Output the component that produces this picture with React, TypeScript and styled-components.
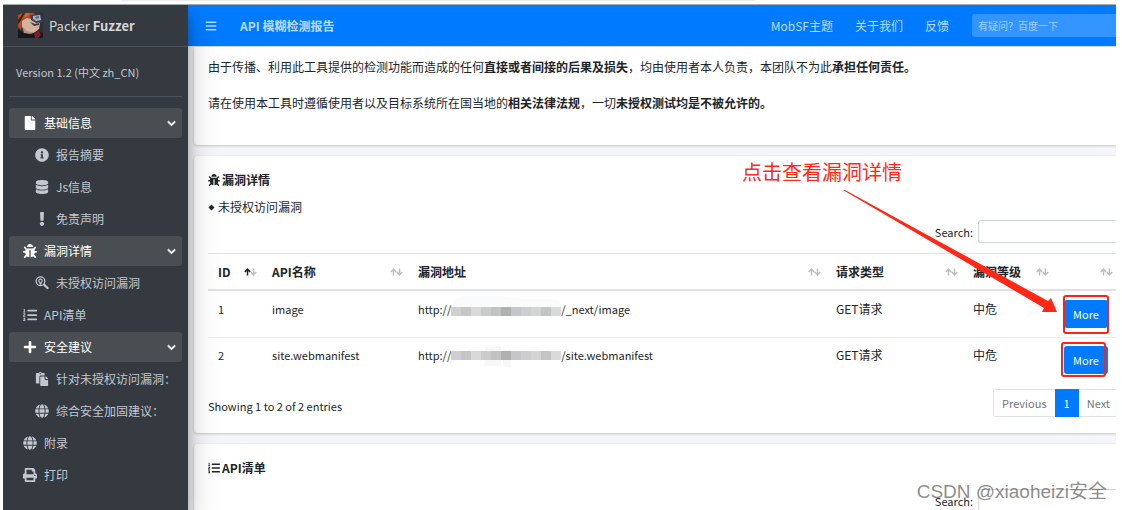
import React from 'react';
import styled, { createGlobalStyle } from 'styled-components';
import {
  FaBars, FaBug, FaChevronDown, FaDatabase, FaExclamation, FaFile, FaGlobe,
  FaInfoCircle, FaListOl, FaPaste, FaPlus, FaPrint,
} from 'react-icons/fa';

const GlobalStyle = createGlobalStyle`
  * { box-sizing: border-box; }
  body {
    margin: 0;
    background: #fff;
    color: #212529;
    font: 12px/18px "Noto Sans CJK SC", "Noto Sans", sans-serif;
  }
  button, input { font: inherit; }
  a { color: inherit; text-decoration: none; }
`;

const Page = styled.div`
  height: 100vh;
  padding: 0 6px 0 3px;
  display: flex;
  flex-direction: column;
  overflow: hidden;
`;

const TopStrip = styled.div`
  flex: none;
  height: 5px;
  border-bottom: 1px solid #a5abb0;
  &::before {
    content: "";
    display: block;
    width: 57%;
    height: 1px;
    margin-left: 118px;
    background: #ededf0;
  }
`;

const Shell = styled.div`
  flex: 1;
  min-height: 0;
  display: flex;
  position: relative;
  overflow: hidden;
`;

const Sidebar = styled.aside`
  flex: none;
  width: 185px;
  position: relative;
  z-index: 2;
  background: #343a40;
  color: #c2c7d0;
  box-shadow: 0 14px 28px rgba(0, 0, 0, .25), 0 10px 10px rgba(0, 0, 0, .22);
`;

const Brand = styled.a`
  display: flex;
  align-items: center;
  gap: 6px;
  height: 42px;
  padding-left: 15px;
  border-bottom: 1px solid #4b545c;
  color: #d5d7d9;
  font-size: 13px;
  b { font-weight: 700; }
`;

const Version = styled.div`
  margin: 0 6px;
  padding: 16px 7px 15px;
  border-bottom: 1px solid #4b545c;
  font-size: 11px;
`;

const Menu = styled.nav`
  display: flex;
  flex-direction: column;
  gap: 2px;
  padding: 11px 6px;
`;

const MenuItem = styled.a<{ $open?: boolean; $nested?: boolean }>`
  display: flex;
  align-items: center;
  gap: 7px;
  height: 30px;
  padding: 0 6px 0 ${p => (p.$nested ? 26 : 14)}px;
  border-radius: 3px;
  white-space: nowrap;
  background: ${p => (p.$open ? '#494e52' : 'transparent')};
  color: ${p => (p.$open ? '#fff' : '#c2c7d0')};
  > svg:first-child { width: 14px; height: 14px; flex: none; }
  > svg:last-child { width: 9px; height: 9px; margin-left: auto; stroke: currentColor; stroke-width: 30px; }
`;

const Main = styled.div`
  flex: 1;
  min-width: 0;
  background: #f4f6f9;
`;

const Header = styled.header`
  display: flex;
  align-items: center;
  gap: 23px;
  height: 42px;
  padding-left: 17px;
  background: #007bff;
  border-bottom: 1px solid #dee2e6;
  color: #b8dbff;
`;

const IconButton = styled.button`
  display: flex;
  padding: 0;
  border: 0;
  background: none;
  color: inherit;
  svg { width: 12px; height: 12px; }
`;

const Links = styled.nav`
  display: flex;
  gap: 22px;
  margin-left: auto;
`;

const HelpInput = styled.input`
  width: 144px;
  height: 23px;
  padding: 0 6px;
  border: 0;
  border-radius: 3px 0 0 3px;
  background: #3395ff;
  color: #fff;
  font-size: 10px;
  &::placeholder { color: #a3cfff; opacity: 1; }
`;

const Content = styled.main`
  display: flex;
  flex-direction: column;
  gap: 11px;
  padding-left: 6px;
`;

const Card = styled.section<{ $flush?: boolean }>`
  padding: ${p => (p.$flush ? '11px 0 33px 14px' : '15px 0 16px 14px')};
  background: #fff;
  border-radius: ${p => (p.$flush ? '0 0 0 3px' : '3px 0 0 3px')};
  box-shadow: 0 0 1px rgba(0, 0, 0, .13), 0 1px 3px rgba(0, 0, 0, .2);
`;

const Paragraph = styled.p`
  margin: 0 0 18px;
  &:last-child { margin: 0; }
`;

const Title = styled.h2`
  display: flex;
  align-items: center;
  gap: 2px;
  margin: 0 0 9px;
  font-size: 12px;
  svg { width: 12px; height: 12px; }
`;

const Subtitle = styled.p`
  display: flex;
  align-items: center;
  gap: 3px;
  margin: 0;
  svg { width: 7px; height: 7px; }
`;

const SearchRow = styled.label<{ $gap: number }>`
  display: flex;
  justify-content: flex-end;
  align-items: center;
  gap: 5px;
  margin-top: ${p => p.$gap}px;
  font-size: 11px;
  line-height: 16px;
  input {
    width: 138px;
    height: 23px;
    border: 1px solid #ced4da;
    border-right: 0;
    border-radius: 3px 0 0 3px;
    background: #fff;
  }
`;

const Table = styled.table`
  width: 100%;
  margin-top: 10px;
  table-layout: fixed;
  border-collapse: separate;
  border-spacing: 0;
  col:nth-child(1) { width: 54px; }
  col:nth-child(2) { width: 146px; }
  col:nth-child(4) { width: 137px; }
  col:nth-child(5) { width: 91px; }
  col:nth-child(6) { width: 62px; }
`;

const HeadCell = styled.th`
  height: 38px;
  padding: 0 5px 0 10px;
  border-top: 1px solid #dee2e6;
  border-bottom: 2px solid #dee2e6;
  text-align: left;
  white-space: nowrap;
  &:last-child { padding-right: 3px; }
`;

const HeadInner = styled.div`
  display: flex;
  align-items: center;
  justify-content: space-between;
  svg { width: 13px; height: 8px; }
`;

const Cell = styled.td<{ $latin?: boolean }>`
  height: 46px;
  padding: 9px 0 0 10px;
  vertical-align: top;
  white-space: nowrap;
  font-size: ${p => (p.$latin ? 11 : 12)}px;
  line-height: 18px;
  tr + tr > & { border-top: 1px solid #e9ecef; padding-top: 8px; }
`;

const Url = styled.span`
  display: flex;
  align-items: center;
  svg { width: 110px; height: 30px; margin: -6px 0; }
`;

const MoreWrap = styled.div`
  position: relative;
  width: 44px;
`;

const MoreButton = styled.button`
  display: block;
  width: 44px;
  height: 28px;
  padding: 0;
  border: 0;
  border-radius: 3px;
  background: #007bff;
  color: #fff;
  font-size: 11px;
`;

const Highlight = styled.div<{ $tall?: boolean }>`
  position: absolute;
  top: ${p => (p.$tall ? -5 : -4)}px;
  left: ${p => (p.$tall ? -1 : -3)}px;
  width: ${p => (p.$tall ? 46 : 45)}px;
  height: ${p => (p.$tall ? 39 : 35)}px;
  border: 2px solid #fb2318;
  border-radius: 3px;
`;

const TableFooter = styled.div`
  display: flex;
  justify-content: space-between;
  margin-top: 6px;
  font-size: 11px;
`;

const Info = styled.span`
  padding-top: 8px;
`;

const Pager = styled.div`
  display: flex;
  border: 1px solid #dee2e6;
  border-right: 0;
  border-radius: 3px 0 0 3px;
`;

const PageButton = styled.button<{ $current?: boolean }>`
  height: ${p => (p.$current ? 28 : 26)}px;
  margin: ${p => (p.$current ? '-1px 0' : '0')};
  padding: 0 ${p => (p.$current ? 9 : 8)}px;
  border: 0;
  background: ${p => (p.$current ? '#007bff' : '#fff')};
  color: ${p => (p.$current ? '#fff' : '#6c757d')};
  &:last-child { padding-right: 6px; }
`;

const Note = styled.div`
  position: absolute;
  z-index: 3;
  top: 153px;
  right: 58px;
  width: 316px;
  color: #ff2817;
  font-size: 20px;
  line-height: 28px;
  pointer-events: none;
  svg { display: block; width: 216px; height: 126px; margin: 4px 0 0 101px; }
`;

const Watermark = styled.div`
  position: absolute;
  z-index: 3;
  right: 9px;
  bottom: 4px;
  color: rgba(90, 90, 90, .7);
  font: 19px/28px "Liberation Sans", "Noto Sans CJK SC", sans-serif;
`;

const Avatar = () => (
  <svg width="25" height="25" viewBox="0 0 25 25" aria-hidden="true">
    <path fill="#26303d" d="M0 0h25v25H0z" />
    <path fill="#b84a22" d="M0 2 4 0h12l3 5-5 2-9 1-2 9-3-3z" />
    <path fill="#e06a2b" d="m2 3 4-2-2 5zM8 0l4 1-6 4z" />
    <path fill="#3b2224" d="m5 0 2 0-5 9-2 2V7z" />
    <path fill="#d2b3a0" d="m4 8 5-3 8 2 5 3-1 6-5 4-7-1-5-5z" />
    <path fill="#b98f7b" d="m4 13 5 5 7 2 3-2-6 4-7-2z" />
    <path fill="#3c4252" d="m12 2 11-1 2 8-7 1-5-3z" />
    <path fill="#a9b4c6" d="m15 3 7-1 1 5-5 1-3-2z" />
    <path fill="#59606f" d="m17 4 4-1v2l-3 1z" />
    <path fill="#4b3435" d="m12 9 5 2 4-1v2l-5 1z" />
    <path fill="#17181f" d="m0 16 5 4 8 1 7-3 5 2v5H0z" />
    <path fill="#7d1f25" d="m16 20 5-2 2 4-3 3h-3z" />
  </svg>
);

const SearchPin = () => (
  <svg viewBox="0 0 14 14" fill="none" stroke="currentColor" aria-hidden="true">
    <circle cx="5.500" cy="5.200" r="4.300" strokeWidth="1.300" />
    <path strokeWidth="2.200" strokeLinecap="round" d="m9.200 8.800 3.300 3.200" />
    <path strokeWidth="1.200" d="M5.500 7.900 7 5.200A1.600 1.600 0 1 0 4 5.200z" />
  </svg>
);

const SortIcon = ({ active }: { active?: boolean }) => (
  <svg viewBox="0 0 13 8" fill="none" strokeWidth="1.5" aria-hidden="true">
    <path stroke={active ? '#212529' : '#bcbebf'} d="M3.5 7.5v-6M.8 4 3.5 1.2 6.2 4" />
    <path stroke="#bcbebf" d="M9.5 .5v6M6.8 4l2.700 2.800L12.200 4" />
  </svg>
);

const MOSAIC = ['#cfcfcf', '#c6c6c6', '#d9d9d9', '#cbcbcb', '#c2c2c2', '#b0b0b0', '#c6c6c8', '#cdcdd0', '#d4d4d4', '#c4c4c4', '#dadada'];

const Redacted = ({ tall }: { tall?: boolean }) => (
  <svg viewBox="0 0 110 30" aria-hidden="true">
    {tall
      ? <path fill="#fafbfb" d="M2 12Q4 2 12 2h38l20 3h34q6 1 6 9H2z" />
      : <path fill="#f8f8f8" d="M34 6h16v20H34zM52 10h8v17h-8z" />}
    {MOSAIC.map((c, i) => (
      <rect key={i} x={i * 10} y={tall ? 13 : 11} width="10" height="9" fill={c} />
    ))}
  </svg>
);

const MENU = [
  { icon: FaFile, text: '基础信息', open: true },
  { icon: FaInfoCircle, text: '报告摘要', nested: true },
  { icon: FaDatabase, text: 'Js信息', nested: true },
  { icon: FaExclamation, text: '免责声明', nested: true },
  { icon: FaBug, text: '漏洞详情', open: true },
  { icon: SearchPin, text: '未授权访问漏洞', nested: true },
  { icon: FaListOl, text: 'API清单' },
  { icon: FaPlus, text: '安全建议', open: true },
  { icon: FaPaste, text: '针对未授权访问漏洞：', nested: true },
  { icon: FaGlobe, text: '综合安全加固建议：', nested: true },
  { icon: FaGlobe, text: '附录' },
  { icon: FaPrint, text: '打印' },
];

const COLUMNS = ['ID', 'API名称', '漏洞地址', '请求类型', '漏洞等级', ''];

const ROWS = [
  { id: 1, name: 'image', path: '/_next/image' },
  { id: 2, name: 'site.webmanifest', path: '/site.webmanifest' },
];

export default function App() {
  return (
    <Page>
      <GlobalStyle />
      <TopStrip />
      <Shell>
        <Sidebar>
          <Brand href="#"><Avatar /><span>Packer <b>Fuzzer</b></span></Brand>
          <Version>Version 1.2 (中文 zh_CN)</Version>
          <Menu>
            {MENU.map(({ icon: Icon, text, open, nested }) => (
              <MenuItem key={text} href="#" $open={open} $nested={nested}>
                <Icon /><span>{text}</span>{open && <FaChevronDown />}
              </MenuItem>
            ))}
          </Menu>
        </Sidebar>
        <Main>
          <Header>
            <IconButton aria-label="菜单"><FaBars /></IconButton>
            <b>API 模糊检测报告</b>
            <Links>
              <a href="#">MobSF主题</a>
              <a href="#">关于我们</a>
              <a href="#">反馈</a>
            </Links>
            <HelpInput aria-label="百度一下" placeholder="有疑问？百度一下" />
          </Header>
          <Content>
            <Card $flush>
              <Paragraph>由于传播、利用此工具提供的检测功能而造成的任何<b>直接或者间接的后果及损失</b>，均由使用者本人负责，本团队不为此<b>承担任何责任。</b></Paragraph>
              <Paragraph>请在使用本工具时遵循使用者以及目标系统所在国当地的<b>相关法律法规</b>，一切<b>未授权测试均是不被允许的。</b></Paragraph>
            </Card>
            <Card>
              <Title><FaBug />漏洞详情</Title>
              <Subtitle>
                <svg viewBox="0 0 7 7" aria-hidden="true"><path fill="#212529" d="m3.500 .5 3 3-3 3-3-3z" /></svg>
                未授权访问漏洞
              </Subtitle>
              <SearchRow $gap={4}>Search:<input type="search" /></SearchRow>
              <Table>
                <colgroup>{COLUMNS.map(c => <col key={c} />)}</colgroup>
                <thead>
                  <tr>
                    {COLUMNS.map((c, i) => (
                      <HeadCell key={c}><HeadInner><span>{c}</span><SortIcon active={i === 0} /></HeadInner></HeadCell>
                    ))}
                  </tr>
                </thead>
                <tbody>
                  {ROWS.map((r, i) => (
                    <tr key={r.id}>
                      <Cell $latin>{r.id}</Cell>
                      <Cell $latin>{r.name}</Cell>
                      <Cell $latin><Url>http://<Redacted tall={i === 0} />{r.path}</Url></Cell>
                      <Cell>GET请求</Cell>
                      <Cell>中危</Cell>
                      <Cell><MoreWrap><MoreButton>More</MoreButton><Highlight $tall={i === 0} /></MoreWrap></Cell>
                    </tr>
                  ))}
                </tbody>
              </Table>
              <TableFooter>
                <Info>Showing 1 to 2 of 2 entries</Info>
                <Pager>
                  <PageButton>Previous</PageButton>
                  <PageButton $current>1</PageButton>
                  <PageButton>Next</PageButton>
                </Pager>
              </TableFooter>
            </Card>
            <Card>
              <Title><FaListOl />API清单</Title>
              <SearchRow $gap={12}>Search:<input type="search" /></SearchRow>
            </Card>
          </Content>
        </Main>
        <Note>
          点击查看漏洞详情
          <svg viewBox="0 0 216 126" aria-hidden="true">
            <path fill="#ff2817" d="m0 0 2 0 203 111 3-3 6 14-15 0 2-4z" />
          </svg>
        </Note>
        <Watermark>CSDN @xiaoheizi安全</Watermark>
      </Shell>
    </Page>
  );
}
